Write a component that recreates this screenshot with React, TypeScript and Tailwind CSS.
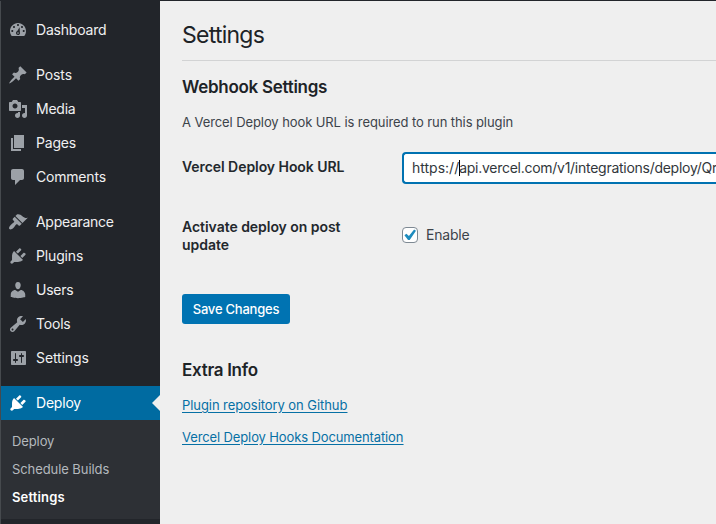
import type { ReactNode } from "react";

const icons: Record<string, ReactNode> = {
  dashboard: (
    <path fillRule="evenodd" d="M3.76 16h12.48c1.11-1.37 1.76-2.86 1.76-4.75 0-4.6-3.58-8.25-8-8.25s-8 3.65-8 8.25c0 1.89.66 3.38 1.76 4.75zM10 4c.55 0 1 .45 1 1s-.45 1-1 1-1-.45-1-1 .45-1 1-1zM6 6c.55 0 1 .45 1 1s-.45 1-1 1-1-.45-1-1 .45-1 1-1zM14 6c.55 0 1 .45 1 1s-.45 1-1 1-1-.45-1-1 .45-1 1-1zM4.3 10c.55 0 1 .45 1 1s-.45 1-1 1-1-.45-1-1 .45-1 1-1zM15.7 10c.55 0 1 .45 1 1s-.45 1-1 1-1-.45-1-1 .45-1 1-1zM11.6 7.2l.3 5.2c.4 1.3-.5 2.6-1.9 2.6-1.2 0-2-.9-2-2 0-.9.6-1.6 1.3-1.9zM10 12.3c-.5 0-.8.4-.8.8s.3.8.8.8.8-.4.8-.8-.3-.8-.8-.8z" />
  ),
  post: (
    <path d="M10.44 3.02l1.82-1.82 6.36 6.35-1.83 1.82c-1.05-.68-2.48-.57-3.41.36l-.75.75c-.92.93-1.04 2.35-.35 3.41l-1.83 1.82-2.41-2.41-2.8 2.79c-.42.42-3.38 2.71-3.8 2.29s1.86-3.39 2.28-3.81l2.79-2.79L4.1 9.36l1.83-1.82c1.05.69 2.48.57 3.4-.36l.75-.75c.93-.92 1.05-2.35.36-3.41z" />
  ),
  media: (
    <path fillRule="evenodd" d="M13 11V4c0-.55-.45-1-1-1h-1.67L9 1H5L3.67 3H2c-.55 0-1 .45-1 1v7c0 .55.45 1 1 1h10c.55 0 1-.45 1-1zM7 4.5c1.38 0 2.5 1.12 2.5 2.5S8.38 9.5 7 9.5 4.5 8.38 4.5 7 5.62 4.5 7 4.5zM14 6h5v10.5c0 1.38-1.12 2.5-2.5 2.5S14 17.88 14 16.5s1.12-2.5 2.5-2.5c.17 0 .34.02.5.05V9h-3V6zm-4 8.05V13h2v3.5c0 1.38-1.12 2.5-2.5 2.5S7 17.88 7 16.5 8.12 14 9.5 14c.17 0 .34.02.5.05z" />
  ),
  page: <path d="M6 15V2h10v13H6zm-1 1h8v2H3V5h2v11z" />,
  comments: (
    <path d="M5 2h9c1.1 0 2 .9 2 2v7c0 1.1-.9 2-2 2h-2l-5 5v-5H5c-1.1 0-2-.9-2-2V4c0-1.1.9-2 2-2z" />
  ),
  appearance: (
    <path d="M14.48 11.06L7.41 3.99l1.5-1.5c.5-.56 2.3-.47 3.51.32 1.21.8 1.43 1.28 2.91 2.1 1.18.64 2.45 1.26 4.45.85zm-.71.71L6.7 4.7 4.93 6.47c-.39.39-.39 1.02 0 1.41l1.06 1.06c.39.39.39 1.03 0 1.42-.6.6-1.43 1.11-2.21 1.69-.35.26-.7.53-1.01.84C1.43 14.23.4 16.08 1.4 17.07c.99 1 2.84-.03 4.18-1.36.31-.31.58-.66.85-1.02.57-.78 1.08-1.61 1.69-2.21.39-.39 1.02-.39 1.41 0l1.06 1.06c.39.39 1.02.39 1.41 0z" />
  ),
  plugins: (
    <path d="M13.11 4.36L9.87 7.6 8 5.73l3.24-3.24c.35-.34 1.05-.2 1.56.32.52.51.66 1.21.31 1.55zm-8 1.77l.91-1.12 9.01 9.01-1.19.84c-.71.71-2.63 1.16-3.82 1.16H6.14L4.9 17.26c-.59.59-1.54.59-2.12 0-.59-.58-.59-1.53 0-2.12l1.24-1.24v-3.88c0-1.13.4-3.19 1.09-3.89zm7.26 3.97l3.24-3.24c.34-.35 1.04-.21 1.55.31.52.51.66 1.21.31 1.55l-3.24 3.25z" />
  ),
  users: (
    <path d="M10 9.25c-2.27 0-2.73-3.44-2.73-3.44C7 4.02 7.82 2 9.97 2c2.16 0 2.98 2.02 2.71 3.81 0 0-.41 3.44-2.68 3.44zm0 2.57L12.72 10c2.39 0 4.52 2.33 4.52 4.53v2.49s-3.65 1.13-7.24 1.13c-3.65 0-7.24-1.13-7.24-1.13v-2.49c0-2.25 1.94-4.48 4.47-4.48z" />
  ),
  tools: (
    <path fillRule="evenodd" d="M16.68 9.77c-1.34 1.34-3.3 1.67-4.95.99l-5.41 6.52c-.99.99-2.59.99-3.58 0s-.99-2.59 0-3.57l6.52-5.42c-.68-1.65-.35-3.61.99-4.95 1.28-1.28 3.12-1.62 4.72-1.06l-2.89 2.89 2.82 2.82 2.86-2.87c.53 1.58.18 3.39-1.08 4.65zM3.81 16.21c.4.39 1.04.39 1.43 0 .4-.4.4-1.04 0-1.43-.39-.4-1.03-.4-1.43 0-.39.39-.39 1.03 0 1.43z" />
  ),
  settings: (
    <path fillRule="evenodd" d="M18 16V4c0-.55-.45-1-1-1H4c-.55 0-1 .45-1 1v12c0 .55.45 1 1 1h13c.55 0 1-.45 1-1zM8 11h1c.55 0 1 .45 1 1s-.45 1-1 1H8v1.5c0 .28-.22.5-.5.5s-.5-.22-.5-.5V13H6c-.55 0-1-.45-1-1s.45-1 1-1h1V5.5c0-.28.22-.5.5-.5s.5.22.5.5V11zm5-2h-1c-.55 0-1-.45-1-1s.45-1 1-1h1V5.5c0-.28.22-.5.5-.5s.5.22.5.5V7h1c.55 0 1 .45 1 1s-.45 1-1 1h-1v5.5c0 .28-.22.5-.5.5s-.5-.22-.5-.5V9z" />
  ),
};

const groups: [string, string, string][][] = [
  [["dashboard", "Dashboard", "tracking-[-0.2px]"]],
  [
    ["post", "Posts", "tracking-[-0.1px]"],
    ["media", "Media", "tracking-[-0.25px]"],
    ["page", "Pages", "tracking-[-0.2px]"],
    ["comments", "Comments", "tracking-[-0.2px]"],
  ],
  [
    ["appearance", "Appearance", "tracking-[-0.3px]"],
    ["plugins", "Plugins", "tracking-[-0.15px]"],
    ["users", "Users", "tracking-[-0.25px]"],
    ["tools", "Tools", "tracking-[-0.2px]"],
    ["settings", "Settings", "tracking-[-0.1px]"],
  ],
];

function Icon({ name }: { name: string }) {
  return (
    <svg viewBox="0 0 20 20" className="size-5 shrink-0 fill-current">
      {icons[name]}
    </svg>
  );
}

function Sidebar() {
  return (
    <nav className="flex w-40 shrink-0 flex-col gap-[11px] border-l border-[#464a4e] bg-[#22252a] pt-3 text-sm text-[#f0f0f1]">
      {groups.map((group, i) => (
        <ul key={i}>
          {group.map(([icon, label, tracking]) => (
            <li key={label} className="flex h-[34px] items-center gap-2 pl-[7px]">
              <span className="text-[#9ca1a7]">
                <Icon name={icon} />
              </span>
              <span className={tracking}>{label}</span>
            </li>
          ))}
        </ul>
      ))}
      <div>
        <div className="relative flex h-[34px] items-center gap-2 bg-[#006ba1] pl-[7px] text-white">
          <Icon name="plugins" />
          <span className="tracking-[-0.2px]">Deploy</span>
          <span className="absolute right-0 top-[9px] border-y-8 border-r-8 border-y-transparent border-r-[#efefef]" />
        </div>
        <ul className="h-[99px] bg-[#2d3035] pl-[11px] pt-[7px] text-[13px] leading-7 text-[#b4b9be]">
          <li className="tracking-[-0.1px]">Deploy</li>
          <li className="tracking-[-0.08px]">Schedule Builds</li>
          <li className="font-semibold tracking-[0.15px] text-white">Settings</li>
        </ul>
      </div>
    </nav>
  );
}

export default function App() {
  return (
    <div className="flex h-[524px] w-[716px] overflow-hidden border-t border-[#22252a] bg-[#efefef] font-[Inter,sans-serif] text-[#3c434a]">
      <Sidebar />
      <main className="min-w-0 flex-1 pl-[22px] text-[13px]">
        <h1 className="h-[60px] border-b border-[#d2d3d4] pt-[18px] text-[23px] leading-8 tracking-[-0.75px] text-[#1d2327]">
          Settings
        </h1>
        <h2 className="mt-[14px] text-[17px] font-semibold leading-6 tracking-[-0.28px] text-[#1d2327]">Webhook Settings</h2>
        <p className="mt-[13px] leading-5 tracking-[-0.09px]">A Vercel Deploy hook URL is required to run this plugin</p>
        <div className="mt-5 flex h-8 items-start">
          <div className="w-[220px] shrink-0 pt-1.5 text-sm font-semibold leading-[18px] tracking-[-0.06px] text-[#23282d]">
            Vercel Deploy Hook URL
          </div>
          <div className="flex h-8 min-w-0 flex-1 items-center overflow-hidden whitespace-nowrap rounded-l border-2 border-r-0 border-[#0072b1] bg-white pl-2 text-sm text-[#32373c]">
            https://
            <span className="-mr-px h-4 w-px shrink-0 bg-black" />
            <span className="tracking-[-0.27px]">api.vercel.com/v1/integrations/deploy/Qr</span>
          </div>
        </div>
        <div className="mt-[34px] flex items-start">
          <div className="w-[220px] shrink-0 pr-10 text-sm font-semibold leading-[18px] tracking-[-0.04px] text-[#23282d]">
            Activate deploy on post update
          </div>
          <div className="flex items-center gap-2 pt-[7px] text-sm leading-5 tracking-[-0.2px]">
            <span className="flex size-4 items-center justify-center rounded border border-[#7e8993] bg-white">
              <svg viewBox="0 0 16 16" className="size-4 shrink-0 fill-[#1e8cbe]">
                <path d="M12.1 2.4 14 3.8 7.7 12.9 6.1 12.9 2.4 8.3 4.4 6.7 6.9 9z" />
              </svg>
            </span>
            Enable
          </div>
        </div>
        <button className="mt-10 block h-[30px] w-[108px] rounded-[3px] bg-[#0073b2] pt-px text-[13px] font-medium tracking-[-0.22px] text-white">
          Save Changes
        </button>
        <h2 className="mt-[34px] text-[17px] font-semibold leading-6 tracking-[-0.28px] text-[#1d2327]">Extra Info</h2>
        <div className="mt-[13px] flex flex-col items-start gap-3 leading-5 text-[#0670a5] underline underline-offset-2">
          <a className="tracking-[-0.07px]">Plugin repository on Github</a>
          <a className="tracking-[-0.12px]">Vercel Deploy Hooks Documentation</a>
        </div>
      </main>
    </div>
  );
}
